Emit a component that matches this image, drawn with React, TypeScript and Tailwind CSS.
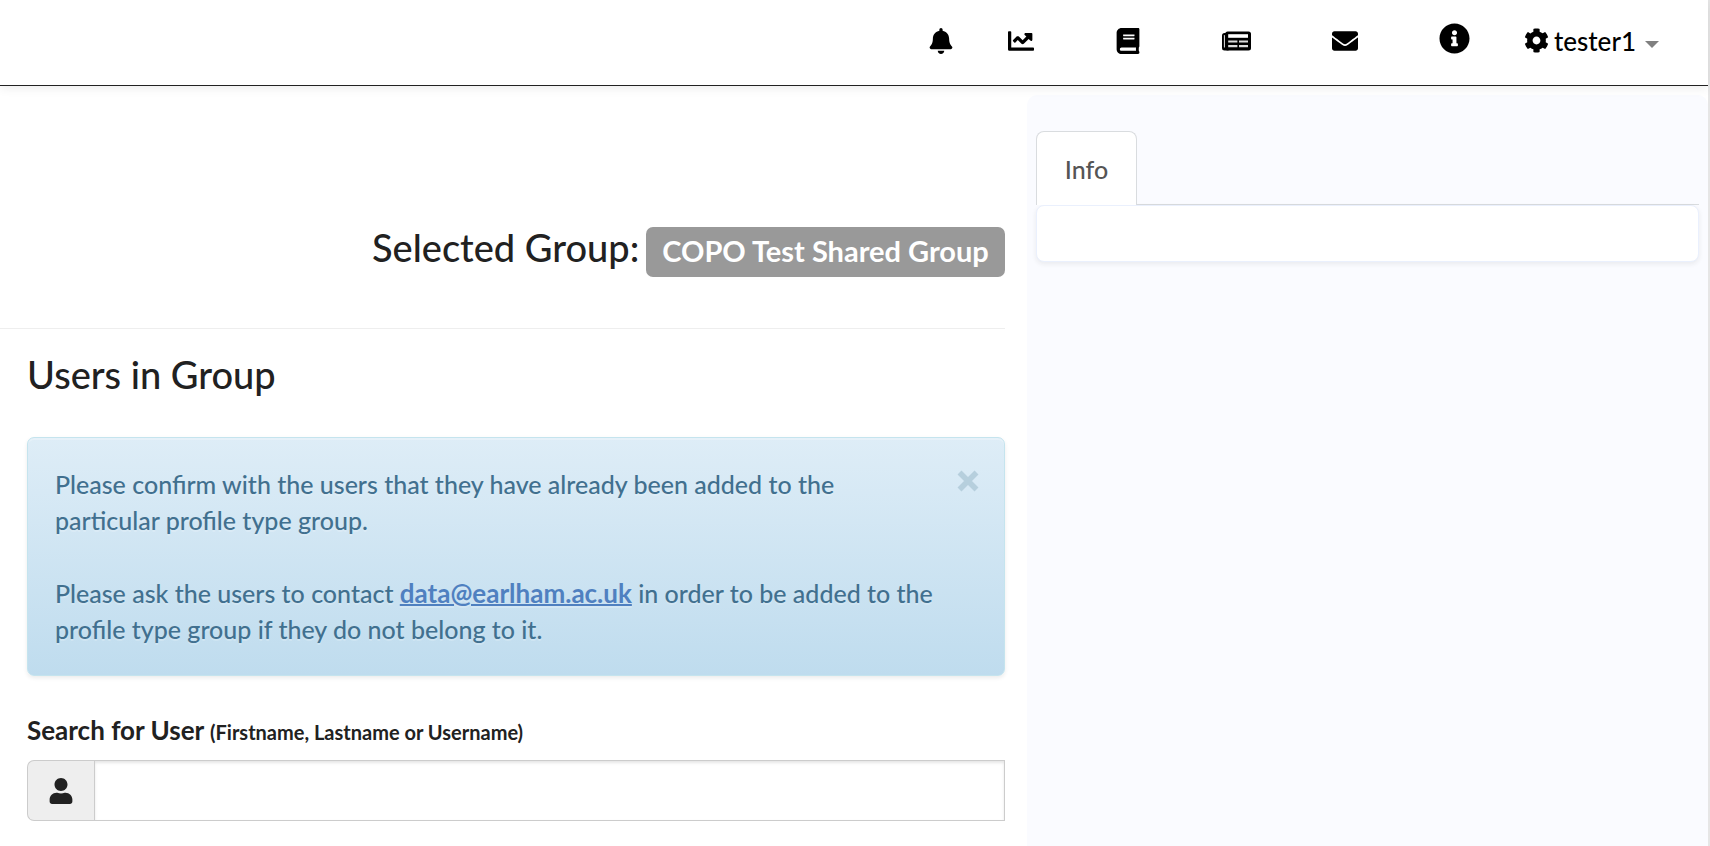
import { FaBell, FaBook, FaChartLine, FaCog, FaEnvelope, FaInfoCircle, FaUser } from 'react-icons/fa';

function NewsIcon({ className }: { className?: string }) {
  return (
    <svg viewBox="0 0 29 26" className={className} aria-hidden="true">
      <rect x="0" y="5" width="8" height="17.5" rx="2.5" fill="#000" />
      <rect x="1.9" y="7" width="1.1" height="12.5" rx="0.5" fill="#ccc" />
      <rect x="3.2" y="3.5" width="25.8" height="19" rx="2.5" fill="#000" />
      <path d="M6.2 6.2H26v3.6H6.2z" fill="#fff" />
      <path d="M6.2 12.4h9.2v2H6.2zM17 12.4h9v2h-9zM6.2 17h9.2v2.2H6.2zM17 17h9v2.2h-9z" fill="#ddd" />
    </svg>
  );
}

const links = [
  { label: 'Statistics', Icon: FaChartLine },
  { label: 'Documentation', Icon: FaBook },
  { label: 'News', Icon: NewsIcon },
  { label: 'Contact', Icon: FaEnvelope },
];

function TopBar() {
  return (
    <header className="relative z-10 h-[86px] border-b border-[#222222] bg-white shadow-[0_2px_10px_rgba(0,0,0,0.08)]">
      <nav className="flex h-[81px] items-center justify-end gap-[54px] pr-[49px] text-black">
        <button type="button" aria-label="Notifications">
          <FaBell className="h-[26px] w-auto" />
        </button>
        <div className="flex items-center gap-[81px]">
          {links.map(({ label, Icon }) => (
            <a key={label} href="#" aria-label={label}>
              <Icon className="h-[26px] w-auto" />
            </a>
          ))}
          <a href="#" aria-label="About" className="pb-1">
            <FaInfoCircle className="h-[31px] w-auto" />
          </a>
        </div>
        <button type="button" className="flex items-center gap-[5px] text-[26px]">
          <FaCog className="h-[25px] w-auto" />
          <span>tester1</span>
          <span className="mt-2 ml-1 border-x-[7px] border-t-[7px] border-x-transparent border-t-[#808080]" />
        </button>
      </nav>
    </header>
  );
}

function GroupNotice() {
  return (
    <div
      role="alert"
      className="mt-[43px] flex items-start justify-between rounded-[7px] border border-[#c5e4ee] bg-linear-to-b from-[#deedf7] to-[#bfdcee] px-[27px] pt-[28px] pb-[28px] text-[#41708f] shadow-[inset_0_2px_0_rgba(255,255,255,0.25),0_2px_4px_rgba(0,0,0,0.08)] text-shadow-[0_2px_0_rgba(255,255,255,0.2)]"
    >
      <div className="max-w-[882px]">
        <p>Please confirm with the users that they have already been added to the particular profile type group.</p>
        <p className="mt-[37px]">
          Please ask the users to contact{' '}
          <a href="mailto:data@earlham.ac.uk" className="text-[26px] leading-[36px] font-bold text-[#4f80c0] underline decoration-2">
            data@earlham.ac.uk
          </a>{' '}
          in order to be added to the profile type group if they do not belong to it.
        </p>
      </div>
      <button type="button" aria-label="Close" className="mt-[4px] -mr-[2px]">
        <svg viewBox="0 0 22 22" className="size-[22px]" stroke="#b6cfdd" strokeWidth="5.6">
          <path d="M2.5 2.5 19.5 19.5M19.5 2.5 2.5 19.5" />
        </svg>
      </button>
    </div>
  );
}

export default function App() {
  return (
    <div className="flex min-h-screen flex-col border-r-2 border-[#e6e6e6] bg-white font-['Lato',sans-serif] text-[25px] leading-[36px] font-medium text-[#212121]">
      <TopBar />
      <div className="grid flex-1 grid-cols-[minmax(0,1fr)_calc(40%-2px)]">
        <main className="pr-[22px]">
          <div className="flex h-[243px] items-start justify-end gap-[7px] border-b border-[#eeeeee] pt-[141px]">
            <h2 className="text-[38px] leading-[40px]">Selected Group:</h2>
            <span className="rounded-[7px] bg-[#999999] px-[16px] pt-[6px] pb-[8px] text-[29px] leading-[36px] font-bold text-white">
              COPO Test Shared Group
            </span>
          </div>
          <section className="pl-[27px] pt-[25px]">
            <h2 className="text-[38px] leading-[40px]">Users in Group</h2>
            <GroupNotice />
            <label htmlFor="user-search" className="mt-[36px] block text-[26px] leading-[36px] font-bold">
              Search for User <small className="text-[20px]">(Firstname, Lastname or Username)</small>
            </label>
            <div className="mt-[10px] flex h-[61px]">
              <span className="flex w-[67px] items-center justify-center rounded-l-[7px] border border-r-0 border-[#cccccc] bg-[#eeeeee]">
                <FaUser className="h-[26px] w-auto" />
              </span>
              <input
                id="user-search"
                type="text"
                className="min-w-0 flex-1 border border-[#cccccc] px-5 shadow-[inset_0_2px_3px_rgba(0,0,0,0.1)] outline-none"
              />
            </div>
          </section>
        </main>
        <aside className="mt-[9px] rounded-t-[10px] bg-[#fafbff] px-[9px] pt-[36px]">
          <div role="tablist" className="flex border-b border-[#d9dcdf]">
            <button
              type="button"
              role="tab"
              aria-selected="true"
              className="-mb-px h-[74px] rounded-t-[8px] border border-b-0 border-[#d9dcdf] bg-white px-[28px] text-[#555555]"
            >
              Info
            </button>
          </div>
          <div role="tabpanel" className="h-[57px] rounded-[8px] border border-[#eaf0fd] bg-white shadow-[0_2px_5px_rgba(34,36,38,0.08)]" />
        </aside>
      </div>
    </div>
  );
}
